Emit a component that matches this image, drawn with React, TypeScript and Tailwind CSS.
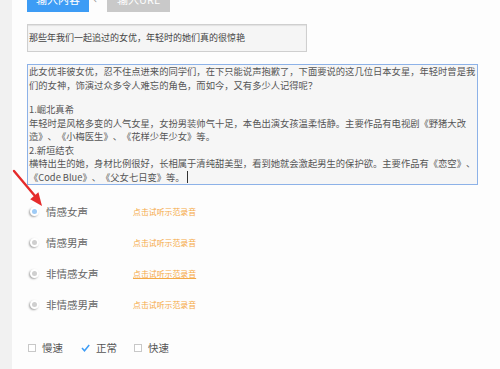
import React from "react";

const font = { fontFamily: '"Noto Sans CJK SC", "Noto Sans", sans-serif' };

const lines1 = [
  "此女优非彼女优，忍不住点进来的同学们，在下只能说声抱歉了，下面要说的这几位日本女星，年轻时曾是我",
  "们的女神，饰演过众多令人难忘的角色，而如今，又有多少人记得呢？",
];
const lines2 = [
  "1.崛北真希",
  "年轻时是风格多变的人气女星，女扮男装帅气十足，本色出演女孩温柔恬静。主要作品有电视剧《野猪大改",
  "造》、《小梅医生》、《花样少年少女》等。",
  "2.新垣结衣",
  "横特出生的她，身材比例很好，长相属于清纯甜美型，看到她就会激起男生的保护欲。主要作品有《恋空》、",
];

const voices = [
  { label: "情感女声", on: true, under: false },
  { label: "情感男声", on: false, under: false },
  { label: "非情感女声", on: false, under: true },
  { label: "非情感男声", on: false, under: false },
];

function Radio({ on }: { on: boolean }) {
  return (
    <span className="flex h-[9px] w-[9px] items-center justify-center rounded-full bg-white shadow-[-1px_1px_2px_rgba(0,0,0,0.35)]">
      <span className={`h-[5px] w-[5px] rounded-full ${on ? "bg-[#9ecbf6]" : "bg-[#cfcfcf]"}`} />
    </span>
  );
}

export default function App() {
  return (
    <div
      className="relative flex h-[369px] w-[500px] overflow-hidden bg-[#fdfdfd] [text-spacing-trim:space-all]"
      style={font}
    >
      <div className="w-[12px] shrink-0 bg-[#f1f1f1]" />
      <div className="flex flex-1 flex-col pl-[15px]">
        {/* tabs */}
        <div className="-mt-[13px] flex h-[25px] items-center">
          <div className="flex h-full w-[62px] items-center justify-center bg-[#3d9cf5] text-[11px] text-white">
            输入内容
          </div>
          <span className="ml-[4px] w-[12px] text-[10px] leading-none text-[#999]">←</span>
          <div className="ml-[2px] flex h-full w-[63px] items-center justify-center bg-[#c9c9c9] text-[11px] text-white">
            输入URL
          </div>
        </div>

        {/* title input */}
        <div className="mt-[12px] flex h-[28px] w-[280px] items-center border border-[#cfcfcf] bg-[#f5f5f5] pl-[1px] text-[9px] text-[#444] shadow-[inset_0_1px_1px_rgba(0,0,0,0.08)]">
          那些年我们一起追过的女优，年轻时的她们真的很惊艳
        </div>

        {/* content */}
        <div className="mt-[12px] h-[121px] w-[451px] border border-[#8db2e8] bg-[#f6f6f6] pl-[1px] text-[9.3px] leading-[13.5px] text-[#555]">
          {lines1.map((l) => (
            <div key={l} className="whitespace-nowrap">{l}</div>
          ))}
          <div className="h-[11px]" />
          {lines2.map((l) => (
            <div key={l} className="whitespace-nowrap">{l}</div>
          ))}
          <div className="flex items-center whitespace-nowrap">
            《Code Blue》、《父女七日变》等。
            <span className="ml-[2px] h-[12px] w-px bg-[#333]" />
          </div>
        </div>

        {/* voices */}
        <div className="mt-[11px] flex flex-col">
          {voices.map((v) => (
            <div key={v.label} className="flex h-[31px] items-center">
              <span className="ml-[3px]">
                <Radio on={v.on} />
              </span>
              <span className="ml-[7px] w-[87px] text-[10.5px] text-[#666]">{v.label}</span>
              <span className={`text-[7.9px] text-[#f5a945] ${v.under ? "underline" : ""}`}>
                点击试听示范录音
              </span>
            </div>
          ))}
        </div>

        {/* speed */}
        <div className="mt-[18px] flex h-[20px] items-center text-[10.5px] text-[#555]">
          <span className="ml-[1px] h-[8px] w-[8px] border border-[#c8c8c8] bg-white" />
          <span className="ml-[6px]">慢速</span>
          <svg className="ml-[18px]" width="9" height="8" viewBox="0 0 9 8">
            <path d="M1 4 L3.5 6.8 L8.2 1" fill="none" stroke="#3d9cf5" strokeWidth="1.5" />
          </svg>
          <span className="ml-[6px]">正常</span>
          <span className="ml-[17px] h-[8px] w-[8px] border border-[#c8c8c8] bg-white" />
          <span className="ml-[6px]">快速</span>
        </div>
      </div>

      {/* red annotation arrow */}
      <svg className="pointer-events-none absolute left-0 top-0" width="500" height="369">
        <line x1="14" y1="171" x2="35" y2="196" stroke="#e52b2b" strokeWidth="2.4" strokeLinecap="round" />
        <polygon points="42,206 38.4,192.2 30.2,199.3" fill="#e52b2b" />
      </svg>
    </div>
  );
}
